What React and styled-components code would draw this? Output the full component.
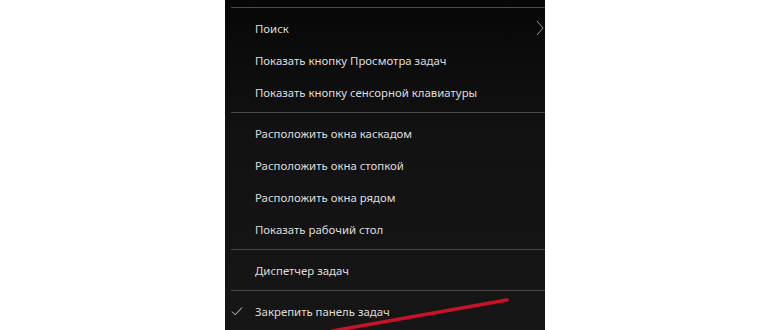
import styled, { createGlobalStyle } from 'styled-components';

const Global = createGlobalStyle`
  html, body {
    margin: 0;
    padding: 0;
    background: #fff;
  }
  body {
    font-family: 'Noto Sans', 'Open Sans', sans-serif;
  }
`;

const Page = styled.div`
  width: 770px;
  height: 330px;
  overflow: hidden;
  position: relative;
  padding-left: 225px;
  box-sizing: border-box;
`;

const Menu = styled.div`
  width: 320px;
  height: 330px;
  padding-top: 3px;
  box-sizing: border-box;
  background: linear-gradient(#070707, #121212 40%, #161616);
  display: flex;
  flex-direction: column;
`;

const Separator = styled.div`
  height: 1px;
  margin: 4px 0 4px 6px;
  background: #4a4a4a;
`;

const Item = styled.div`
  height: 32px;
  display: flex;
  align-items: center;
  padding-left: 30px;
  position: relative;
  color: #dedede;
  font-size: 11.4px;
  white-space: nowrap;
`;

const Side = styled.span`
  position: absolute;
  top: 0;
  bottom: 0;
  display: flex;
  align-items: center;
  ${(p) => (p.$right ? 'right: 1px;' : 'left: 6px;')}
`;

const Arrow = styled.svg`
  position: absolute;
  left: 0;
  top: 0;
  pointer-events: none;
`;

const Chevron = () => (
  <svg width="8" height="16" viewBox="0 0 8 16">
    <path d="M1 1 L7 8 L1 15" stroke="#9a9a9a" strokeWidth="1" fill="none" />
  </svg>
);

const Check = () => (
  <svg width="12" height="12" viewBox="0 0 12 12">
    <path d="M1 6.5 L4.2 9.8 L11 2.5" stroke="#cfcfcf" strokeWidth="1" fill="none" />
  </svg>
);

const groups = [
  [
    { label: 'Поиск', sub: true },
    { label: 'Показать кнопку Просмотра задач' },
    { label: 'Показать кнопку сенсорной клавиатуры' },
  ],
  [
    { label: 'Расположить окна каскадом' },
    { label: 'Расположить окна стопкой' },
    { label: 'Расположить окна рядом' },
    { label: 'Показать рабочий стол' },
  ],
  [{ label: 'Диспетчер задач' }],
  [{ label: 'Закрепить панель задач', checked: true }],
];

export default function App() {
  return (
    <>
      <Global />
      <Page>
        <Menu>
          {groups.map((g, i) => (
            <div key={i}>
              <Separator />
              {g.map((it) => (
                <Item key={it.label}>
                  {it.checked && (
                    <Side>
                      <Check />
                    </Side>
                  )}
                  {it.label}
                  {it.sub && (
                    <Side $right>
                      <Chevron />
                    </Side>
                  )}
                </Item>
              ))}
            </div>
          ))}
        </Menu>
        <Arrow width="770" height="330">
          <line x1="332" y1="331" x2="507" y2="300" stroke="#c8122a" strokeWidth="3.5" strokeLinecap="round" />
        </Arrow>
      </Page>
    </>
  );
}
